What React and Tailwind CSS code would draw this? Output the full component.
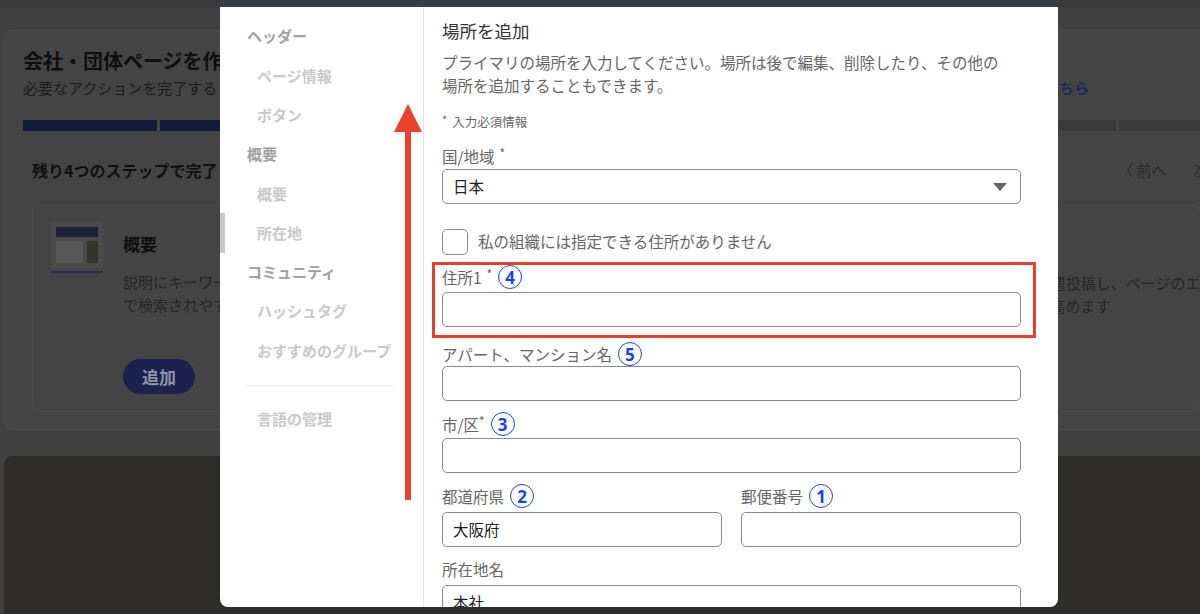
const navItems = [
    {id: 1, name: 'ヘッダー', section: true},
    {id: 2, name: 'ページ情報'},
    {id: 3, name: 'ボタン'},
    {id: 4, name: '概要', section: true},
    {id: 5, name: '概要'},
    {id: 6, name: '所在地', active: true},
    {id: 7, name: 'コミュニティ', section: true},
    {id: 8, name: 'ハッシュタグ'},
    {id: 9, name: 'おすすめのグループ'},
];

const steps = [1, 2, 3, 4, 5, 6, 7, 8, 9];

const Num = ({n}) => (
    <span className="ml-[6px] inline-flex h-[24px] w-[24px] shrink-0 items-center justify-center rounded-full border-[1.5px] border-[#1b3ff0] font-['Noto_Sans',sans-serif] text-[17px] font-bold leading-none text-[#1b3ff0]">
        {n}
    </span>
);

const Star = () => <span className="ml-[5px] self-start text-[12px] leading-[14px]">*</span>;

const Label = ({children, className = ''}) => (
    <div className={'flex h-[20px] items-center text-[15.5px] leading-[20px] text-[#666] ' + className}>
        {children}
    </div>
);

const Input = ({value, className = ''}) => (
    <div className={'flex h-[35px] items-center rounded-[5px] border border-[#8a8a8a] px-[10px] text-[15.5px] text-[#222] ' + className}>
        {value}
    </div>
);

const PageIcon = () => (
    <div className="flex w-[52px] shrink-0 flex-col gap-[3px]">
        <div className="flex h-[46px] flex-col gap-[4px] bg-[#4a4a4a] p-[5px]">
            <div className="h-[10px] bg-[#1c2137]"></div>
            <div className="flex flex-1 gap-[4px]">
                <div className="flex-1 bg-[#565656]"></div>
                <div className="w-[11px] bg-[#35322c]"></div>
            </div>
        </div>
        <div className="h-[2px] bg-[#2a3152]"></div>
        <div className="mx-[4px] h-[1px] bg-[#3a3f52]"></div>
    </div>
);

const Background = () => (
    <div className="flex h-full flex-col">
        <div className="h-[8px] bg-[#3a3a3a]"></div>
        <div className="ml-[4px] mr-[-20px] mt-[22px] h-[400px] rounded-[8px] border border-[#4b4b4b] bg-[#444] px-[18px] pt-[18px]">
            <div className="text-[20px] font-bold leading-[24px] text-[#0f0f0f]">会社・団体ページを作成しましょう</div>
            <div className="mt-[4px] flex text-[15px] leading-[22px] text-[#1b1b1b]">
                <span>必要なアクションを完了すると、ページの効果を高めることができます。</span>
                <span className="ml-auto mr-[112px] font-bold text-[#1d2a5e]">詳しくはこちら</span>
            </div>
            <div className="mt-[21px] flex gap-[3px]">
                {steps.map((s) => (
                    <div key={s} className={s < 6 ? 'h-[11px] w-[134px] shrink-0 bg-[#141b3b]' : 'h-[11px] w-[134px] shrink-0 bg-[#3a3a3c]'}></div>
                ))}
            </div>
            <div className="mt-[27px] flex items-center pl-[9px]">
                <span className="text-[16px] font-bold leading-[24px] text-[#111]">残り4つのステップで完了します</span>
                <div className="ml-auto mr-[-41px] flex gap-[27px] text-[15px] text-[#2b2b2b]">
                    <span>〈 前へ</span>
                    <span>次へ 〉</span>
                </div>
            </div>
            <div className="ml-[9px] mt-[23px] flex h-[207px] gap-[16px]">
                <div className="flex w-[560px] shrink-0 gap-[20px] rounded-[8px] border border-[#4b4b4b] px-[18px] pt-[16px]">
                    <PageIcon/>
                    <div className="flex flex-col">
                        <div className="mt-[9px] text-[17px] font-bold leading-[26px] text-[#0e0e0e]">概要</div>
                        <div className="mt-[13px] text-[15px] leading-[23px] text-[#272727]">
                            説明にキーワードを含めると、Google<br/>で検索されやすくなります
                        </div>
                        <div className="mt-[43px] flex h-[35px] w-[72px] items-center justify-center rounded-full bg-[#1b2250] text-[17px] font-bold text-[#8e93a6]">
                            追加
                        </div>
                    </div>
                </div>
                <div className="min-w-0 flex-1 overflow-hidden rounded-[8px] border border-[#4b4b4b] pt-[65px]">
                    <div className="ml-[97px] whitespace-nowrap text-[15px] leading-[23px] text-[#272727]">
                        ページの最新情報や役立つコンテンツを定期的に毎週投稿し、ページのエンゲージメント<br/>
                        ンゲージメントを促進し、フォロワーとの関係性を高めます
                    </div>
                </div>
            </div>
        </div>
        <div className="ml-[4px] mt-[26px] flex-1 rounded-tl-[8px] bg-[#2e2d2a]"></div>
    </div>
);

const Nav = () => (
    <div className="w-[204px] shrink-0 border-r border-[#e3e3e3] pt-[10px]">
        {navItems.map((item) => (
            <div key={item.id} className="relative flex h-[39.3px] items-center">
                {item.active && <div className="absolute left-0 top-0 h-[40px] w-[5px] bg-[#c9c9c9]"></div>}
                <span className={item.section ? 'pl-[27px] text-[15px] font-semibold text-[#a0a0a0]' : 'pl-[37px] text-[15px] font-semibold text-[#c9c9c9]'}>
                    {item.name}
                </span>
            </div>
        ))}
        <div className="ml-[25px] mr-[27px] mt-[14px] h-[1px] bg-[#ececec]"></div>
        <div className="mt-[14px] flex h-[39.3px] items-center pl-[37px] text-[15px] font-semibold text-[#c9c9c9]">
            言語の管理
        </div>
    </div>
);

const Form = () => (
    <div className="flex-1 pl-[18px] pr-[37px] pt-[12px]">
        <div className="h-[24px] text-[17.5px] leading-[24px] text-[#333]">場所を追加</div>
        <div className="mt-[7.5px] text-[15.5px] leading-[23px] text-[#666]">
            プライマリの場所を入力してください。場所は後で編集、削除したり、その他の<br/>
            場所を追加することもできます。
        </div>
        <div className="mt-[16px] flex h-[18px] items-center text-[12.5px] leading-[18px] text-[#666]">
            <span className="mr-[5px] self-start text-[11px] leading-[12px] text-[#3d5ee0]">*</span>
            入力必須情報
        </div>
        <Label className="mt-[15px]">国/地域<Star/></Label>
        <div className="mt-[3.5px] flex h-[35px] items-center rounded-[5px] border border-[#8a8a8a] pl-[10px] pr-[13px] text-[15.5px] text-[#222]">
            日本
            <svg className="ml-auto" width="14" height="8" viewBox="0 0 14 8">
                <polygon points="0,0 14,0 7,8" fill="#666"/>
            </svg>
        </div>
        <div className="mt-[25px] flex h-[26px] items-center">
            <div className="h-[26px] w-[26px] rounded-[5px] border border-[#8a8a8a]"></div>
            <span className="ml-[10px] text-[15.5px] text-[#666]">私の組織には指定できる住所がありません</span>
        </div>
        <div className="ml-[-10px] mr-[-15px] mt-[7px] border-[3px] border-[#e7402a] pb-[8px] pl-[7px] pr-[12px] pt-[2px]">
            <Label>住所1<Star/><Num n="4"/></Label>
            <Input className="mt-[5px]"/>
        </div>
        <Label className="mt-[6px]">アパート、マンション名<Num n="5"/></Label>
        <Input className="mt-[2px]"/>
        <Label className="mt-[13px]">市/区<span className="self-start text-[12px] leading-[14px]">*</span><Num n="3"/></Label>
        <Input className="mt-[4px]"/>
        <div className="mt-[13px] grid grid-cols-2 gap-x-[19px]">
            <Label>都道府県<Num n="2"/></Label>
            <Label>郵便番号<Num n="1"/></Label>
            <Input className="mt-[6px]" value="大阪府"/>
            <Input className="mt-[6px]"/>
        </div>
        <Label className="mt-[12px]">所在地名</Label>
        <Input className="mt-[6px]" value="本社"/>
    </div>
);

const App = () => {
    return (
        <div className="relative h-[614px] w-[1200px] overflow-hidden bg-[#414141] font-['Noto_Sans_CJK_JP','Noto_Sans',sans-serif]">
            <Background/>
            <div className="absolute left-[220px] top-0 flex w-[838px] flex-col">
                <div className="h-[7px] bg-[#383d48]"></div>
                <div className="relative flex h-[600px] overflow-hidden rounded-b-[8px] bg-white">
                    <Nav/>
                    <Form/>
                    <svg className="absolute left-[174px] top-[97px]" width="28" height="396" viewBox="0 0 28 396">
                        <polygon points="14,0 28,28 0,28" fill="#e8432a"/>
                        <rect x="11" y="26" width="6" height="370" fill="#e8432a"/>
                    </svg>
                </div>
            </div>
        </div>
    );
};

export default App;
